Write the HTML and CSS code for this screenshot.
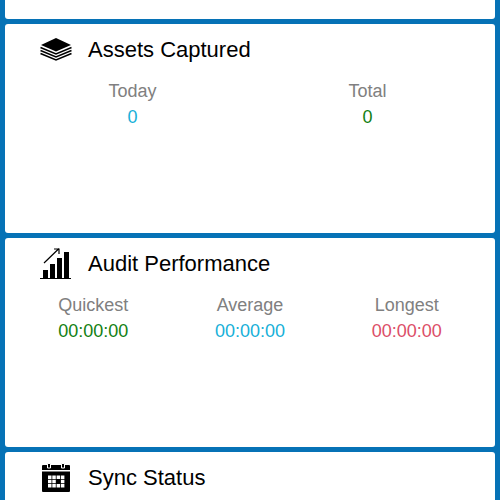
FILE: index.html
```html
<!DOCTYPE html>
<html lang="en">
<head>
<meta charset="UTF-8">
<meta name="viewport" content="width=device-width, initial-scale=1.0">
<title>Dashboard</title>
<link rel="stylesheet" href="styles.css">
</head>
<body>
<main class="dashboard">
  <section class="card card-end"></section>

  <section class="card">
    <header class="card-title">
      <svg class="icon" viewBox="0 0 32 32" aria-hidden="true">
        <path d="M16 4L31 11L16 17.500L1 11Z"/>
        <path d="M0.500 13.500L16 20L31.500 13.500M0.500 16.500L16 23L31.500 16.500M0.500 19.500L16 26L31.500 19.500" fill="none" stroke="#000" stroke-width="1.6"/>
      </svg>
      <h2>Assets Captured</h2>
    </header>
    <dl class="stats">
      <div class="stat"><dt>Today</dt><dd class="blue">0</dd></div>
      <div class="stat"><dt>Total</dt><dd class="green">0</dd></div>
    </dl>
  </section>

  <section class="card">
    <header class="card-title">
      <svg class="icon" viewBox="0 0 32 32" aria-hidden="true">
        <path d="M3 22h5v8H3zM10 16h5v14h-5zM17 10h5v20h-5zM24 4h5v26h-5z"/>
        <path d="M0 30.500h31M4 15L19 0.500M14 1h5v5" fill="none" stroke="#000" stroke-width="1.2"/>
      </svg>
      <h2>Audit Performance</h2>
    </header>
    <dl class="stats">
      <div class="stat"><dt>Quickest</dt><dd class="green">00:00:00</dd></div>
      <div class="stat"><dt>Average</dt><dd class="blue">00:00:00</dd></div>
      <div class="stat"><dt>Longest</dt><dd class="red">00:00:00</dd></div>
    </dl>
  </section>

  <section class="card">
    <header class="card-title">
      <svg class="icon" viewBox="0 0 32 32" aria-hidden="true">
        <path d="M2 8V4q0-1 1-1h26q1 0 1 1v4zM2 9.500h28V29q0 1-1 1H3q-1 0-1-1z"/>
        <path d="M7.500 1.500h3v4.500h-3zM21.500 1.500h3v4.500h-3z" stroke="#fff" stroke-width="1"/>
        <path fill="#fff" d="M8 13.500h3.500v3.500H8zM12.300 13.500h3.500v3.500h-3.500zM16.600 13.500h3.500v3.500h-3.500zM20.900 13.500h3.500v3.500h-3.500zM8 17.800h3.500v3.500H8zM12.300 17.800h3.500v3.500h-3.500zM20.900 17.800h3.500v3.500h-3.500zM8 22.100h3.500v3.500H8zM12.300 22.100h3.500v3.500h-3.500zM16.600 22.100h3.500v3.500h-3.500zM20.900 22.100h3.500v3.500h-3.500z"/>
      </svg>
      <h2>Sync Status</h2>
    </header>
  </section>
</main>
</body>
</html>
```
FILE: styles.css
```css
* {
  box-sizing: border-box;
}
body {
  margin: 0;
  background-color: #0672b6;
  font-family: "Liberation Sans", Arial, sans-serif;
}
.dashboard {
  display: flex;
  flex-direction: column;
  gap: 5px;
  height: 100vh;
  padding: 0 5px;
  overflow: hidden;
}
.card {
  flex: none;
  min-height: 209px;
  padding: 10px;
  border-radius: 3px;
  background-color: #fff;
}
.card-end {
  min-height: 0;
  padding-top: 9px;
  border-top-left-radius: 0;
  border-top-right-radius: 0;
}
.card-title {
  display: flex;
  align-items: center;
  gap: 16px;
  padding-left: 25px;
}
.icon {
  width: 32px;
  height: 32px;
}
h2 {
  margin: 0;
  font-size: 22px;
  font-weight: normal;
  line-height: 32px;
}
.stats {
  display: flex;
  margin: 12px 0 0;
  font-size: 18px;
  line-height: 26px;
  text-align: center;
}
.stat {
  flex: 1;
}
dt {
  color: #808080;
}
dd {
  margin: 0;
}
.blue {
  color: #17b0d8;
}
.green {
  color: #128012;
}
.red {
  color: #dc4e68;
}
```
